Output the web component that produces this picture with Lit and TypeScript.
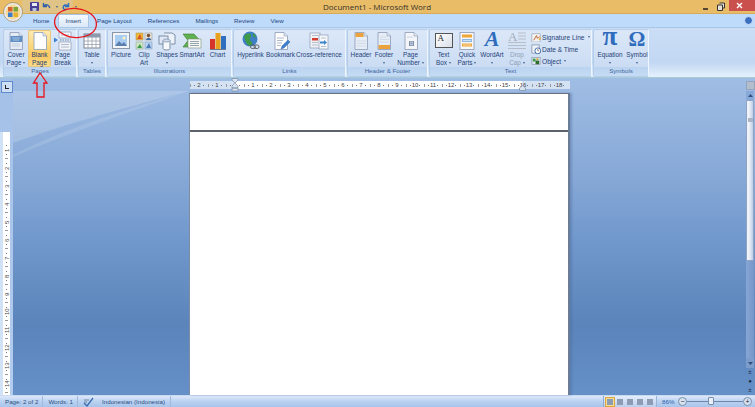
import { LitElement, html, css, svg } from "lit";
import { customElement } from "lit/decorators.js";

const page = (inner: unknown, fill = "#fdfdfe") => svg`
  <path d="M4 1.500h9l3.500 3.500v13.500H4z" fill=${fill} stroke="#8a9ab5" stroke-width=".8"/>
  <path d="M13 1.500V5h3.500" fill="#dfe6f1" stroke="#8a9ab5" stroke-width=".6"/>
  ${inner}`;

const icons: Record<string, unknown> = {
  cover: page(svg`<rect x="4.500" y="5" width="11.500" height="6" fill="#5f8fc4"/><path d="M6 7h8M7 9h6" stroke="#cfe0f3" stroke-width=".7"/><path d="M6 13h8M6 15h8" stroke="#b6c3d6" stroke-width=".7"/>`, "#e4ebf5"),
  blank: page(svg``),
  pagebreak: svg`
    <path d="M6 1h12v6H6z" fill="#f4f6fa" stroke="#8a9ab5" stroke-width=".7"/>
    <path d="M6 11h12v8H6z" fill="#f4f6fa" stroke="#8a9ab5" stroke-width=".7"/>
    <path d="M8 13.500h8M8 16h8M8 4h8" stroke="#9aa8bf" stroke-width=".8"/>
    <path d="M7 9h11" stroke="#7a8ba6" stroke-dasharray="1.500 1"/>
    <path d="M1 6.500l4 2.500-4 2.500z" fill="#3f7fd0"/>`,
  table: svg`
    <rect x="2" y="3" width="16" height="14" fill="#fff" stroke="#7d8794"/>
    <rect x="2" y="3" width="16" height="3.500" fill="#8b9bb0"/>
    <path d="M2 10h16M2 13.500h16M6 3v14M10 3v14M14 3v14" stroke="#8c96a3" stroke-width=".7"/>`,
  picture: svg`
    <rect x="1.500" y="1.500" width="17" height="16" fill="#f2f4f7" stroke="#8a97a8"/>
    <rect x="4" y="4" width="12" height="11" fill="#a9cdf0"/>
    <path d="M4 15l4-5 3 3 2-2 3 4z" fill="#5d7fb0"/>
    <circle cx="13" cy="7" r="1.500" fill="#fff3c4"/>`,
  clipart: svg`
    <rect x="2" y="2" width="7" height="7" fill="#f0b93a" stroke="#a48a4b" stroke-width=".5"/>
    <path d="M3 8l3-5 2 5z" fill="#d8572b"/>
    <rect x="11" y="2" width="7" height="7" fill="#e9e4d9" stroke="#8a8a8a" stroke-width=".5"/>
    <circle cx="14.500" cy="4.500" r="1.700" fill="#7a4f33"/><path d="M12 9c.4-3 5-3 5 0z" fill="#3e6ea8"/>
    <rect x="2" y="11" width="7" height="7" fill="#cfe8c3" stroke="#8a9a8a" stroke-width=".5"/>
    <path d="M3 17l3-4 2 4z" fill="#3d9a4a"/>
    <rect x="11" y="11" width="7" height="7" fill="#b6d4f2" stroke="#7f93ad" stroke-width=".5"/>
    <path d="M12 17l3-5 2 5z" fill="#4d78b4"/>`,
  shapes: svg`
    <path d="M7 2h8l3 2v9h-4" fill="#eef3fa" stroke="#7a8ea9"/>
    <rect x="2" y="5" width="9" height="8" fill="#dfe8f4" stroke="#7a8ea9"/>
    <path d="M6 9.500h7v8a3.500 1.500 0 0 1-7 0z" fill="#f6f8fb" stroke="#7a8ea9"/>
    <ellipse cx="9.500" cy="9.500" rx="3.500" ry="1.500" fill="#cfdbea" stroke="#7a8ea9" stroke-width=".7"/>`,
  smartart: svg`
    <path d="M1 3l11 0 6 6.500-6 6.500H1l5-6.500z" fill="#5fb04f" stroke="#3c7d34" stroke-width=".6"/>
    <rect x="6" y="8" width="13" height="9" fill="#f4f7f3" stroke="#7d8f7c" stroke-width=".6"/>
    <path d="M8 10.500h9M8 12.500h9M8 14.500h9" stroke="#7f8f9d" stroke-width=".8"/>`,
  chart: svg`
    <rect x="2" y="8" width="5" height="10" fill="#d6332a"/>
    <rect x="7.500" y="2" width="5" height="16" fill="#e8a21f"/>
    <rect x="13" y="5" width="5" height="13" fill="#2f6fbe"/>
    <path d="M2 18.500h16" stroke="#6d7a8a"/>`,
  hyperlink: svg`
    <circle cx="9" cy="8" r="7.500" fill="#3d7fc4"/>
    <path d="M3 5c3-3 6-3 7-1s-2 3-1 5 3 2 2 4-3 2-4 1-3-4-4-9z" fill="#3f9a45"/>
    <path d="M12 2c2 1 3 3 3 5l-3-2z" fill="#3f9a45"/>
    <rect x="9.500" y="14" width="5" height="3.500" rx="1.700" fill="none" stroke="#555" stroke-width=".9"/>
    <rect x="13" y="14" width="5" height="3.500" rx="1.700" fill="none" stroke="#555" stroke-width=".9"/>`,
  bookmark: page(svg`<path d="M6 7h7M6 9.500h6M6 12h5M6 14.500h4" stroke="#9aa8bf" stroke-width=".8"/><path d="M11 15l6-6 2 2-6 6-3 1z" fill="#3f7fd0" stroke="#2d5f9f" stroke-width=".4"/>`),
  xref: svg`
    <rect x="1" y="2" width="10" height="15" fill="#f0f2f6" stroke="#8a9ab5" stroke-width=".7"/>
    <rect x="10" y="4" width="9" height="14" fill="#f7f8fa" stroke="#8a9ab5" stroke-width=".7"/>
    <rect x="3" y="7" width="6" height="2.500" fill="#d63c30"/>
    <path d="M3 4.500h6M3 11.500h6M3 14h6M12 7h5M12 15.500h5" stroke="#a4b0c3" stroke-width=".8"/>
    <path d="M11 10.500h4v-1.500l3 2.500-3 2.500v-1.500h-4z" fill="#3f86c9"/>`,
  header: page(svg`<rect x="4.500" y="2" width="8" height="4" fill="#eba13c"/><path d="M6 10h9M6 12.500h9M6 15h9" stroke="#ccd5e3" stroke-width=".8"/>`, "#e7edf6"),
  footer: page(svg`<rect x="4.500" y="14" width="11.500" height="4" fill="#eba13c"/><path d="M6 6h6M6 8.500h9M6 11h9" stroke="#ccd5e3" stroke-width=".8"/>`, "#e7edf6"),
  pagenum: page(svg`<rect x="8" y="10" width="5" height="5" fill="#7c8ea8"/><path d="M9 11.200h3M9 13.500h3M9.800 10.500v4M11.300 10.500v4" stroke="#e7edf6" stroke-width=".5"/><path d="M6 6h6" stroke="#ccd5e3"/>`, "#f3f5f9"),
  quick: svg`
    <rect x="3" y="1.500" width="14" height="17" fill="#f6f7f9" stroke="#8a9ab5" stroke-width=".8"/>
    <rect x="5" y="3.500" width="10" height="3" fill="#eea637"/>
    <rect x="5" y="8" width="10" height="3" fill="#8db6e3"/>
    <rect x="5" y="12.500" width="10" height="3" fill="#eea637"/>
    <path d="M6 9.500h8M6 14h8" stroke="#fff" stroke-width=".6"/>`,
  dropcap: svg`
    <path d="M11 2h8M11 5h8M11 8h8M1 11.500h18M1 14.500h18M1 17.500h18" stroke="#b5bdc9" stroke-width="1"/>`,
  signature: svg`
    <rect x="1" y="2" width="9" height="9" fill="#f2f3f5" stroke="#8b93a0" stroke-width=".6"/>
    <path d="M3 9l3-5 1 3 2-2" fill="none" stroke="#bd5a22"/>
    <path d="M8 9l2-4 1 3z" fill="#e8b23a"/>`,
  datetime: svg`
    <rect x="1" y="1" width="8" height="9" fill="#eef1f6" stroke="#6d7f9c" stroke-width=".7"/>
    <circle cx="7.500" cy="7.500" r="3.200" fill="#fff" stroke="#3a68a8"/>
    <path d="M7.500 5.500v2h1.500" stroke="#333" stroke-width=".6" fill="none"/>`,
  object: svg`
    <rect x="1" y="1.500" width="9" height="8" fill="#dce6f2" stroke="#7b8794" stroke-width=".6"/>
    <rect x="2" y="3" width="3" height="3" fill="#3a9a46"/>
    <rect x="5" y="5" width="4" height="4" fill="#2f6c2f"/>
    <rect x="6" y="2.500" width="2" height="2" fill="#d8a42c"/>`,
};

type Btn = { lines: string[]; w: number; icon?: string; glyph?: string; arrow?: boolean; active?: boolean; off?: boolean };
type Group = { label: string; w: number; pad: number; btns: Btn[]; small?: { t: string; icon: string; arrow?: boolean }[] };

const groups: Group[] = [
  { label: "Pages", w: 74, pad: 0, btns: [
    { lines: ["Cover", "Page"], w: 24, icon: "cover", arrow: true },
    { lines: ["Blank", "Page"], w: 23, icon: "blank", active: true },
    { lines: ["Page", "Break"], w: 23, icon: "pagebreak" },
  ] },
  { label: "Tables", w: 28, pad: 0, btns: [{ lines: ["Table", ""], w: 26, icon: "table", arrow: true }] },
  { label: "Illustrations", w: 125, pad: 0, btns: [
    { lines: ["Picture"], w: 26, icon: "picture" },
    { lines: ["Clip", "Art"], w: 20, icon: "clipart" },
    { lines: ["Shapes", ""], w: 26, icon: "shapes", arrow: true },
    { lines: ["SmartArt"], w: 24, icon: "smartart" },
    { lines: ["Chart"], w: 27, icon: "chart" },
  ] },
  { label: "Links", w: 113, pad: 2, btns: [
    { lines: ["Hyperlink"], w: 29, icon: "hyperlink" },
    { lines: ["Bookmark"], w: 31, icon: "bookmark" },
    { lines: ["Cross-reference"], w: 46, icon: "xref" },
  ] },
  { label: "Header & Footer", w: 81, pad: 0, btns: [
    { lines: ["Header", ""], w: 26, icon: "header", arrow: true },
    { lines: ["Footer", ""], w: 20, icon: "footer", arrow: true },
    { lines: ["Page", "Number"], w: 33, icon: "pagenum", arrow: true },
  ] },
  { label: "Text", w: 163, pad: 2, btns: [
    { lines: ["Text", "Box"], w: 23, glyph: "textbox", arrow: true },
    { lines: ["Quick", "Parts"], w: 24, icon: "quick", arrow: true },
    { lines: ["WordArt", ""], w: 26, glyph: "wordart", arrow: true },
    { lines: ["Drop", "Cap"], w: 24, icon: "dropcap", arrow: true, off: true },
  ], small: [
    { t: "Signature Line", icon: "signature", arrow: true },
    { t: "Date & Time", icon: "datetime" },
    { t: "Object", icon: "object", arrow: true },
  ] },
  { label: "Symbols", w: 56, pad: 0, btns: [
    { lines: ["Equation", ""], w: 32, glyph: "pi", arrow: true },
    { lines: ["Symbol", ""], w: 22, glyph: "omega", arrow: true },
  ] },
];

const tabs = ["Home", "Insert", "Page Layout", "References", "Mailings", "Review", "View"];
const rulerH = ["2", "1", "", ...Array.from({ length: 18 }, (_, i) => String(i + 1))];
const rulerV = Array.from({ length: 14 }, (_, i) => String(i + 1));

@customElement("app-root")
export class AppRoot extends LitElement {
  static styles = css`
    :host { display: block; width: 755px; height: 407px; overflow: hidden; }
    * { box-sizing: border-box; }
    .app { position: relative; width: 755px; height: 407px; display: flex; flex-direction: column; overflow: hidden;
      --canvas: linear-gradient(#a0bde4, #87a9d7 30%, #7299cd 50%, #5a84ba 78%, #6590c8);
      font-family: "Liberation Sans", Arial, sans-serif; font-size: 6.400px; color: #1f4379; }

    .title { height: 14px; flex: none; display: flex; align-items: center; background: #e9bd68; border-bottom: 1px solid #d7ab5c; }
    .qat { width: 51px; height: 13px; margin-left: 22px; display: flex; align-items: center; gap: 3px; padding-left: 8px;
      background: #dfc387; border-radius: 0 0 9px 0; flex: none; }
    .qat svg { flex: none; }
    .more { margin-left: 4px; }
    .doc { flex: 1; text-align: center; font-family: "Open Sans", sans-serif; font-size: 8px; color: #36322a; padding-right: 24px; }
    .win { display: flex; align-items: center; height: 13px; }
    .win svg { width: 10px; height: 10px; }
    .win svg:first-child { margin-right: 5px; }
    .win svg:nth-child(2) { margin-right: 3px; }
    .close { width: 26px; height: 11px; margin-bottom: 2px; background: #c9504c; display: flex; align-items: center; justify-content: center; }
    .close svg { width: 7px; height: 7px; }

    .tabs { height: 13px; flex: none; display: flex; align-items: flex-end; padding-left: 25px; background: #bfdbfb; position: relative; }
    .tab { height: 13px; padding: 3px 8px 0; font-size: 6.200px; color: #21457c; white-space: nowrap; }
    .tab.on { background: linear-gradient(#f4f9fe, #dbe8f8); border: 1px solid #a9c4e2; border-bottom: 0; border-radius: 2px 2px 0 0; padding: 2px 7px 0; }
    .help { position: absolute; right: 2px; top: 2px; width: 9px; height: 9px; border-radius: 50%; background: #3a6fc0; border: 1px solid #d5e5f8; }

    .ribbon { height: 51px; flex: none; display: flex; padding: 1px 0 0 3px; gap: 1px;
      background: linear-gradient(#cbdef6, #c2d7f2 70%, #e4f1fd); border-top: 1px solid #a8c6e6; border-bottom: 1px solid #a6cad6; }
    .group { height: 48px; display: flex; flex-direction: column; border: 1px solid #b4cde9; border-radius: 2px;
      background: linear-gradient(#dce8f8, #c6d9f2); flex: none; border-right-color: #eef5fd; }
    .btns { flex: 1; display: flex; min-height: 0; }
    .btn { height: 37px; flex: none; display: flex; flex-direction: column; align-items: center; padding-top: 1px; line-height: 8px; white-space: nowrap; text-align: center; }
    .btn.active { background: linear-gradient(#fdecb6, #fbd67c 45%, #f9c862 70%, #fddf8e); box-shadow: inset 0 0 0 1px #e8c67c; border-radius: 2px; }
    .btn.off { color: #8fa0b6; }
    .btn > svg { width: 20px; height: 20px; flex: none; display: block; }
    .glyph { height: 20px; flex: none; display: flex; align-items: center; justify-content: center; }
    .pi, .omega, .wordart { align-items: flex-start; font-family: "Liberation Serif", "DejaVu Serif", serif; font-weight: 700; color: #2f6cbd; }
    .pi { font-size: 27px; line-height: 11px; }
    .omega { font-size: 21px; line-height: 17px; }
    .wordart { font-style: italic; font-size: 22px; line-height: 16px; }
    .textbox { width: 18px; height: 15px; margin: 2px 0 3px; background: linear-gradient(135deg, #fff, #d9dfe8); border: 1px solid #555; font-family: "Liberation Serif", serif; font-size: 9px; color: #222; align-items: flex-start; justify-content: flex-start; padding-left: 2px; line-height: 9px; }
    .dropwrap { position: relative; width: 20px; height: 20px; flex: none; }
    .dropwrap svg { width: 20px; height: 20px; display: block; }
    .dropA { font-family: "Liberation Serif", serif; font-size: 13px; color: #a3adbb; position: absolute; left: 1px; top: 0; line-height: 11px; }
    .arrow { width: 0; height: 0; border: 1.500px solid transparent; border-top: 2px solid #40618f; border-bottom: 0; display: inline-block; vertical-align: middle; margin: 0 0 0 2px; }
    .line { height: 8px; }
    .line.only .arrow { margin: 0; }
    .small { display: flex; flex-direction: column; padding: 1px 0 0 2px; }
    .srow { height: 12px; display: flex; align-items: center; gap: 1px; white-space: nowrap; font-size: 6.600px; }
    .srow svg { width: 10px; height: 10px; flex: none; }
    .glabel { height: 9px; flex: none; background: linear-gradient(#bad3f0, #c6dcf5); text-align: center; line-height: 8px; color: #3f659c; font-size: 6.200px; }

    .work { flex: 1; display: flex; min-height: 0; background: #a3bfe6; }
    .left { width: 13px; flex: none; display: flex; flex-direction: column; align-items: flex-start; background: linear-gradient(#a4c0e7, #b3ccee); }
    .corner { width: 12px; height: 12px; margin: 3px 0 0 1px; flex: none; border: 1px solid #5f8ad0; background: #cfdff3; display: flex; align-items: center; justify-content: center; }
    .corner i { width: 4px; height: 4px; border-left: 1.500px solid #223; border-bottom: 1.500px solid #223; display: block; }
    .vruler { width: 7px; margin: 39px 0 0 3px; flex: 1; background: #fff; display: flex; flex-direction: column; padding-top: 9px; overflow: hidden; box-shadow: -3px 0 0 #d2e2f6; }
    .vcell { height: 18px; flex: none; display: flex; align-items: center; justify-content: center; writing-mode: vertical-rl; transform: rotate(180deg); font-size: 6px; color: #444;
      background: linear-gradient(#777, #777) center 4px / 1px 1px no-repeat, linear-gradient(#777, #777) center 13px / 1px 1px no-repeat, linear-gradient(#999, #999) center 0 / 3px 1px no-repeat; }

    .center { flex: 1; position: relative; min-width: 0; display: flex; flex-direction: column; padding-left: 176px; background: var(--canvas); }
    .swoosh { position: absolute; left: 0; top: 13px; width: 176px; height: 80px; }
    .hruler { position: relative; height: 8px; width: 380px; margin: 3px 0 0 1px; flex: none; display: flex; background: linear-gradient(90deg, #d4e2f3 44px, #fff 44px, #fff 332px, #d4e2f3 332px); }
    .hcell { width: 18px; flex: none; display: flex; align-items: center; justify-content: center; font-size: 6px; color: #444; line-height: 8px;
      background: linear-gradient(#777, #777) 4px center / 1px 1px no-repeat, linear-gradient(#777, #777) 13px center / 1px 1px no-repeat, linear-gradient(#999, #999) 0 center / 1px 3px no-repeat; }
    .indent { position: absolute; top: -3px; left: 41px; }
    .indent2 { position: absolute; top: 4px; left: 329px; }
    .page { position: relative; margin-top: 4px; width: 381px; flex: 1; background: #fff; border-top: 1px solid #6a7180; border-left: 1px solid #7d8ca3; border-right: 2px solid #6b7c96; box-shadow: 2px 0 2px #4a6a9a66; display: flex; flex-direction: column; }
    .header { height: 38px; flex: none; border-bottom: 2px solid #5d626a; }

    .scroll { width: 10px; flex: none; display: flex; flex-direction: column; padding-left: 1px; background: var(--canvas); }
    .sview { width: 9px; height: 9px; margin-top: 3px; background: #b3bdcb; border: 1px solid #93a3bb; flex: none; }
    .sbtn { width: 8px; height: 9px; flex: none; display: flex; align-items: center; justify-content: center; }
    .sbtn.up { margin-top: 1px; background: #87a8d8; height: 9px; }
    .sbtn.down { height: 10px; background: #7c9ccb; }
    .thumb { width: 8px; height: 161px; flex: none; background: linear-gradient(90deg, #f0f4fa 25%, #dfe7f2 55%, #bccde5); border: 1px solid #8ea4c6; border-radius: 1px; display: flex; justify-content: center; padding-top: 17px; }
    .thumb i { width: 5px; height: 4px; background: #aab6c8; display: block; }
    .track { width: 8px; flex: 1; background: linear-gradient(90deg, #86a6d6, #7596c8); }
    .sdot { height: 9px; width: 8px; flex: none; display: flex; align-items: center; justify-content: center; color: #1a2b44; font-size: 6px; line-height: 9px; }

    .status { height: 12px; flex: none; display: flex; align-items: center; background: linear-gradient(#dde9fa, #bcd3f1 45%, #a7c4eb); border-top: 1px solid #c9daf0; color: #2f4f80; white-space: nowrap; font-size: 6.200px; }
    .st { height: 11px; display: flex; align-items: center; padding: 0 4px 0 5px; border-right: 1px solid #9fb9dc; }
    .st.proof { padding: 0 3px 0 5px; border-right: 0; }
    .st.lang { padding: 0 5px; }
    .st svg { width: 11px; height: 10px; }
    .fill { flex: 1; }
    .views { display: flex; align-items: center; height: 11px; padding: 0 1px; background: linear-gradient(#e4eefb, #b9cfec); border-left: 1px solid #8eaad0; border-right: 1px solid #9ab4d6; }
    .view { width: 10px; height: 10px; border: 1px solid transparent; display: flex; align-items: center; justify-content: center; }
    .view.on { background: #fbdc8f; border-color: #d8a73e; }
    .view i { width: 6px; height: 6px; background: #8d9cb2; display: block; }
    .zoom { display: flex; align-items: center; padding: 0 3px 0 5px; color: #2d5fa8; }
    .pct { width: 11px; margin-right: 5px; }
    .circ { width: 9px; height: 9px; flex: none; border-radius: 50%; background: #d8e3f1; border: 1px solid #7a8ea9; display: flex; align-items: center; justify-content: center; font-size: 7px; line-height: 7px; color: #223; }
    .slider { width: 56px; height: 1px; background: #6f87aa; position: relative; }
    .knob { position: absolute; left: 21px; top: -4px; width: 6px; height: 8px; background: #e9eff8; border: 1px solid #7a8ea9; border-radius: 1px; }

    .marks { position: absolute; left: 0; top: 0; width: 755px; height: 407px; pointer-events: none; }
    .orb { position: absolute; left: 3px; top: 2px; width: 20px; height: 20px; }
  `;

  private renderGlyph(name: string) {
    if (name === "pi") return html`<div class="glyph pi">π</div>`;
    if (name === "omega") return html`<div class="glyph omega">Ω</div>`;
    if (name === "wordart") return html`<div class="glyph wordart">A</div>`;
    return html`<div class="glyph textbox">A</div>`;
  }

  private renderBtn(b: Btn) {
    const cls = `btn${b.active ? " active" : ""}${b.off ? " off" : ""}`;
    const last = b.lines.length - 1;
    return html`<div class=${cls} style="width:${b.w}px">
      ${b.glyph
        ? this.renderGlyph(b.glyph)
        : b.icon === "dropcap"
          ? html`<div class="dropwrap"><svg viewBox="0 0 20 20">${icons.dropcap}</svg><span class="dropA">A</span></div>`
          : html`<svg viewBox="0 0 20 20">${icons[b.icon!]}</svg>`}
      ${b.lines.map((l, i) => html`<div class="line ${l ? "" : "only"}">${l}${b.arrow && i === last ? html`<span class="arrow"></span>` : ""}</div>`)}
    </div>`;
  }

  render() {
    return html`<div class="app">
      <div class="title">
        <div class="qat">
          <svg width="9" height="9" viewBox="0 0 9 9"><rect width="9" height="9" rx="1" fill="#4a3f96"/><rect x="2" y="1" width="5" height="3" fill="#e6ebf5"/><rect x="2.500" y="6" width="4" height="3" fill="#b8c4dc"/></svg>
          <svg width="9" height="9" viewBox="0 0 9 9"><path d="M1.500 1v3.500H5M1.800 4.300C3.500 1.800 7 2.300 7.800 6" fill="none" stroke="#2c5ea8" stroke-width="1.400"/></svg>
          <span class="arrow"></span>
          <svg width="9" height="9" viewBox="0 0 9 9"><path d="M7.500 1v3.500H4M7.200 4.300C5.500 1.800 2 2.800 2.200 6a2.500 2.500 0 0 0 4 1" fill="none" stroke="#2c6cc0" stroke-width="1.400"/></svg>
        </div>
        <span class="arrow more"></span>
        <div class="doc">Document1 - Microsoft Word</div>
        <div class="win">
          <svg viewBox="0 0 10 10"><path d="M2 7h5" stroke="#222" stroke-width="1.500"/></svg>
          <svg viewBox="0 0 10 10"><path d="M3.500 1h5v5h-1.500M1.500 3h5v5.500h-5z" fill="#e8e2d4" stroke="#333"/></svg>
          <div class="close"><svg viewBox="0 0 7 7"><path d="M1 1l5 5M6 1l-5 5" stroke="#fff" stroke-width="1.400"/></svg></div>
        </div>
      </div>

      <div class="tabs">
        ${tabs.map((t) => html`<div class="tab ${t === "Insert" ? "on" : ""}">${t}</div>`)}
        <div class="help"></div>
      </div>

      <div class="ribbon">
        ${groups.map((g) => html`<div class="group" style="width:${g.w}px">
          <div class="btns" style="padding-left:${g.pad}px">
            ${g.btns.map((b) => this.renderBtn(b))}
            ${g.small
              ? html`<div class="small">${g.small.map((s) => html`<div class="srow"><svg viewBox="0 0 11 11">${icons[s.icon]}</svg>${s.t}${s.arrow ? html`<span class="arrow"></span>` : ""}</div>`)}</div>`
              : ""}
          </div>
          <div class="glabel">${g.label}</div>
        </div>`)}
      </div>

      <div class="work">
        <div class="left">
          <div class="corner"><i></i></div>
          <div class="vruler">${rulerV.map((n) => html`<div class="vcell">${n}</div>`)}</div>
        </div>
        <div class="center">
          <svg class="swoosh" viewBox="0 0 176 80" preserveAspectRatio="none">
            <path d="M0 0H176C120 14 50 34 0 52z" fill="#fff" opacity=".18"/>
            <path d="M0 64C50 38 120 16 176 0C120 20 50 44 0 66z" fill="#fff" opacity=".12"/>
          </svg>
          <div class="hruler">
            ${rulerH.map((n) => html`<div class="hcell">${n}</div>`)}
            <svg class="indent" width="8" height="14" viewBox="0 0 8 14"><path d="M1 .5h6V2L4 5 1 2zM1 8l3-3 3 3v2H1zM1 10h6v3H1z" fill="#d9e4f2" stroke="#6d7f99" stroke-width=".6"/></svg>
            <svg class="indent2" width="7" height="6" viewBox="0 0 7 6"><path d="M.5 5.500V3l3-2.500 3 2.500v2.500z" fill="#d9e4f2" stroke="#6d7f99" stroke-width=".6"/></svg>
          </div>
          <div class="page"><div class="header"></div></div>
        </div>
        <div class="scroll">
          <div class="sview"></div>
          <div class="sbtn up"><svg width="5" height="3" viewBox="0 0 5 3"><path d="M0 3l2.500-3L5 3z" fill="#33507c"/></svg></div>
          <div class="thumb"><i></i></div>
          <div class="track"></div>
          <div class="sbtn down"><svg width="5" height="3" viewBox="0 0 5 3"><path d="M0 0l2.500 3L5 0z" fill="#33507c"/></svg></div>
          <div class="sdot">±</div>
          <div class="sdot">●</div>
          <div class="sdot">±</div>
        </div>
      </div>

      <div class="status">
        <div class="st">Page: 2 of 2</div>
        <div class="st">Words: 1</div>
        <div class="st proof"><svg viewBox="0 0 11 10"><path d="M1 6l3 3 6-8" fill="none" stroke="#3b6cb0" stroke-width="1.300"/><path d="M1 3h5M1 5h3" stroke="#5d7390" stroke-width=".8"/></svg></div>
        <div class="st lang">Indonesian (Indonesia)</div>
        <div class="fill"></div>
        <div class="views">
          <div class="view on"><i></i></div><div class="view"><i></i></div><div class="view"><i></i></div><div class="view"><i></i></div><div class="view"><i></i></div>
        </div>
        <div class="zoom"><span class="pct">86%</span><div class="circ">−</div><div class="slider"><div class="knob"></div></div><div class="circ">+</div></div>
      </div>

      <svg class="orb" viewBox="0 0 20 20">
        <circle cx="10" cy="10" r="9.500" fill="#e8ecf1" stroke="#a78d5e" stroke-width=".8"/>
        <circle cx="10" cy="10" r="7.500" fill="#f6d89b"/>
        <rect x="5" y="5" width="4.500" height="4.500" fill="#d8622b"/>
        <rect x="10.500" y="5" width="4.500" height="4.500" fill="#79a53a"/>
        <rect x="5" y="10.500" width="4.500" height="4.500" fill="#3a7cc7"/>
        <rect x="10.500" y="10.500" width="4.500" height="4.500" fill="#e6b02f"/>
      </svg>
      <svg class="marks" viewBox="0 0 755 407">
        <ellipse cx="75.500" cy="23" rx="21" ry="14.500" transform="rotate(6 75.500 23)" fill="none" stroke="#e8141c" stroke-width="1.300"/>
        <path d="M40 73L47 83H44V97H37V83H33.500z" fill="none" stroke="#e8141c" stroke-width="1.300"/>
      </svg>
    </div>`;
  }
}
